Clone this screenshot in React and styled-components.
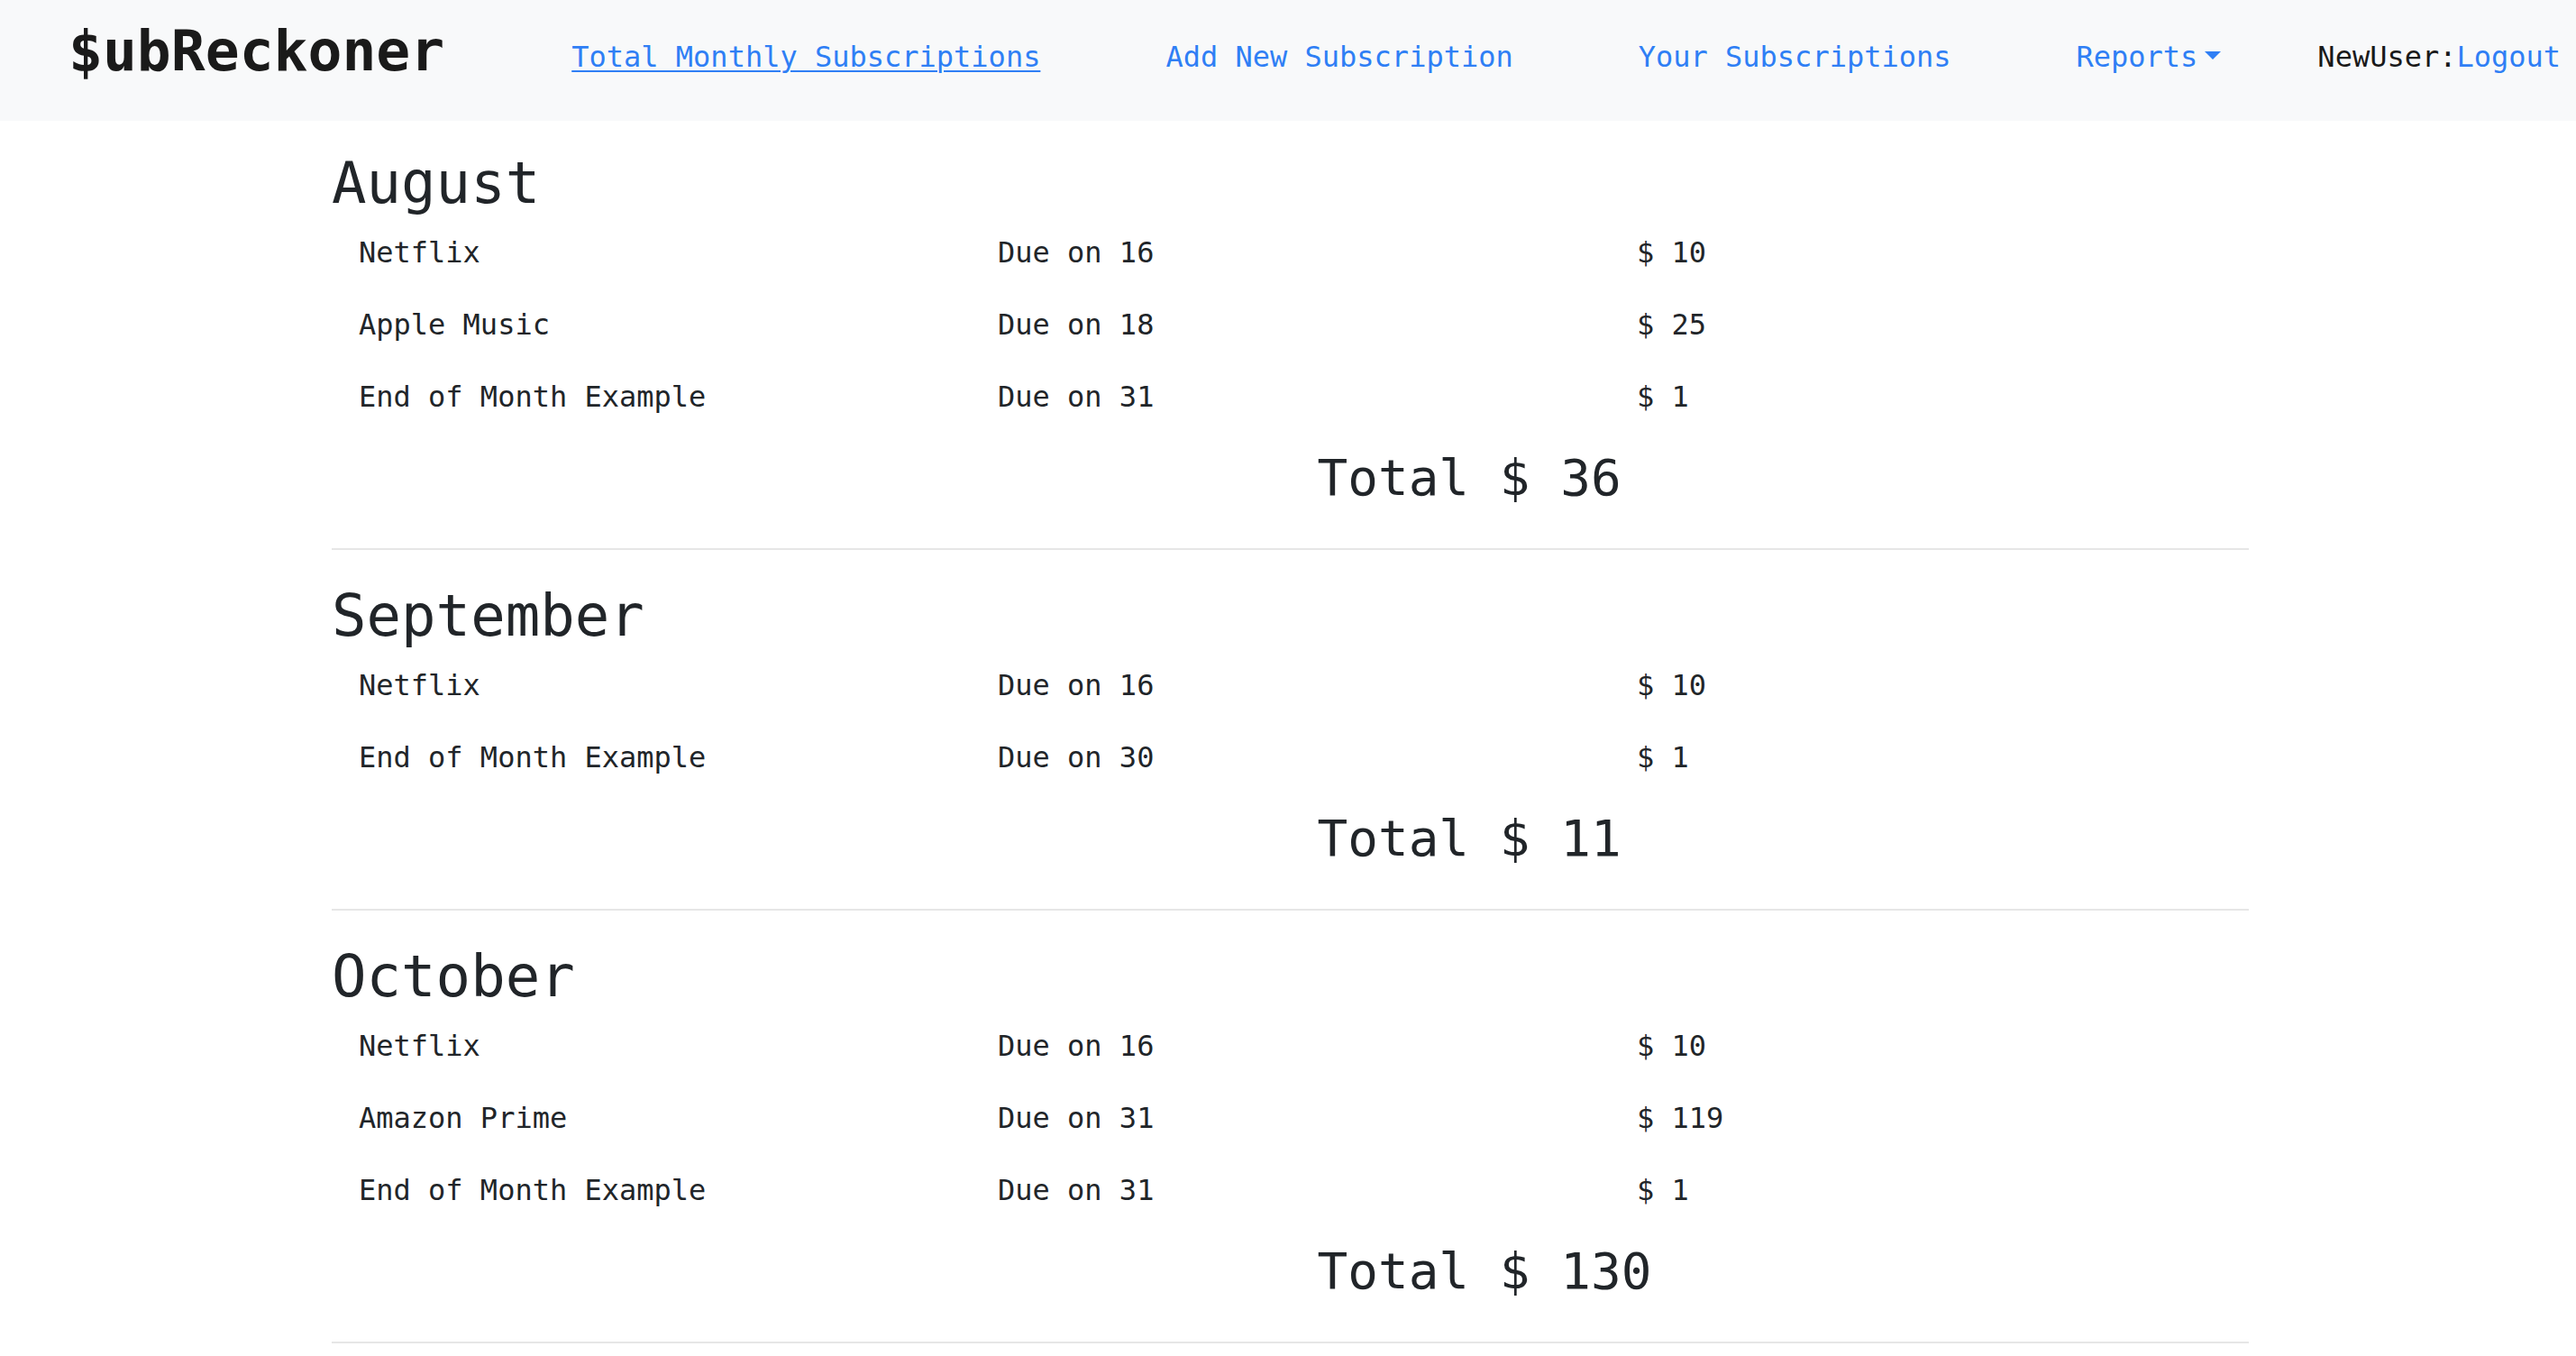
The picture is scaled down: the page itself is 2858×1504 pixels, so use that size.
import React from 'react'
import styled, { createGlobalStyle } from 'styled-components'

const GlobalStyle = createGlobalStyle`
  html, body {
    margin: 0;
    padding: 0;
    background: #fff;
    overflow: hidden;
  }
  body {
    font-family: "DejaVu Sans Mono", "Liberation Mono", monospace;
    color: #212529;
  }
`

const Navbar = styled.nav`
  display: flex;
  align-items: flex-start;
  height: 134px;
  box-sizing: border-box;
  padding: 9px 0 0 76px;
  background: #f8f9fa;
`

const Brand = styled.div`
  font-size: 63px;
  line-height: 96px;
  font-weight: bold;
  color: #1a1a1a;
  margin-right: 141px;
`

const NavList = styled.div`
  display: flex;
  gap: 139px;
  margin-top: 30px;
`

const NavLink = styled.a`
  font-size: 32px;
  line-height: 48px;
  color: #2f7ff5;
  text-decoration: ${props => (props.active ? 'underline' : 'none')};
  text-underline-offset: 4px;
  text-decoration-thickness: 2px;
  cursor: pointer;
  white-space: nowrap;
`

const Dropdown = styled(NavLink)`
  &::after {
    content: '';
    display: inline-block;
    margin-left: 8px;
    vertical-align: 0.255em;
    border-top: 9.6px solid #2f7ff5;
    border-left: 9.6px solid transparent;
    border-right: 9.6px solid transparent;
  }
`

const UserBox = styled.div`
  margin: 30px 0 0 107px;
  font-size: 32px;
  line-height: 48px;
  color: #1a1a1a;
  white-space: nowrap;
`

const Main = styled.main`
  width: 2127px;
  margin-left: 368px;
  padding-top: 32px;
`

const Month = styled.section``

const MonthTitle = styled.h2`
  margin: 0;
  font-size: 64px;
  line-height: 74px;
  font-weight: normal;
`

const Row = styled.div`
  display: grid;
  grid-template-columns: repeat(3, 1fr);
  font-size: 32px;
  line-height: 48px;
  padding: 16px 0;
`

const Cell = styled.div`
  padding-left: 30px;
  white-space: nowrap;
`

const TotalRow = styled.div`
  display: grid;
  grid-template-columns: 1fr 1fr;
  margin-top: 16px;
`

const Total = styled.h3`
  grid-column: 2;
  margin: 0;
  padding-left: 30px;
  font-size: 56px;
  line-height: 67px;
  font-weight: normal;
`

const Divider = styled.hr`
  border: 0;
  border-top: 2px solid #e6e6e6;
  margin: 45px 0 36px;
`

const months = [
  {
    name: 'August',
    items: [
      { name: 'Netflix', due: 16, cost: 10 },
      { name: 'Apple Music', due: 18, cost: 25 },
      { name: 'End of Month Example', due: 31, cost: 1 },
    ],
  },
  {
    name: 'September',
    items: [
      { name: 'Netflix', due: 16, cost: 10 },
      { name: 'End of Month Example', due: 30, cost: 1 },
    ],
  },
  {
    name: 'October',
    items: [
      { name: 'Netflix', due: 16, cost: 10 },
      { name: 'Amazon Prime', due: 31, cost: 119 },
      { name: 'End of Month Example', due: 31, cost: 1 },
    ],
  },
]

export default function App() {
  return (
    <>
      <GlobalStyle />
      <Navbar>
        <Brand>$ubReckoner</Brand>
        <NavList>
          <NavLink active>Total Monthly Subscriptions</NavLink>
          <NavLink>Add New Subscription</NavLink>
          <NavLink>Your Subscriptions</NavLink>
          <Dropdown>Reports</Dropdown>
        </NavList>
        <UserBox>
          NewUser:<NavLink>Logout</NavLink>
        </UserBox>
      </Navbar>
      <Main>
        {months.map(month => {
          const total = month.items.reduce((sum, item) => sum + item.cost, 0)
          return (
            <Month key={month.name}>
              <MonthTitle>{month.name}</MonthTitle>
              {month.items.map(item => (
                <Row key={item.name}>
                  <Cell>{item.name}</Cell>
                  <Cell>Due on {item.due}</Cell>
                  <Cell>$ {item.cost}</Cell>
                </Row>
              ))}
              <TotalRow>
                <Total>Total $ {total}</Total>
              </TotalRow>
              <Divider />
            </Month>
          )
        })}
      </Main>
    </>
  )
}
